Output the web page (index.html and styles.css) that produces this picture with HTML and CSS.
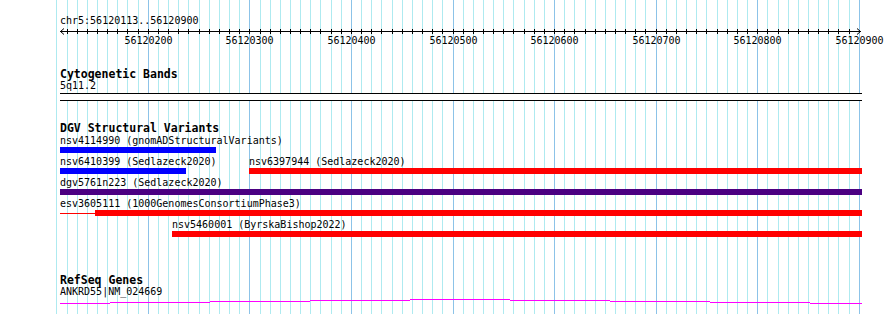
FILE: index.html
```html
<!DOCTYPE html>
<html lang="en">
<head>
  <meta charset="UTF-8">
  <title>chr5:56120113..56120900</title>
  <link rel="stylesheet" href="styles.css">
</head>
<body>
  <div class="browser">
    <svg class="grid" id="grid" width="890" height="314"></svg>

    <div class="tracks">
      <div class="location">chr5:56120113..56120900</div>
      <svg class="ruler" id="ruler" width="890" height="22"></svg>

      <section class="track cyto">
        <h2 class="track-label">Cytogenetic Bands</h2>
        <div class="row">
          <div class="feature" style="margin-left: 60px; width: 802px;">
            <div class="feature-label">5q11.2</div>
            <div class="band"></div>
          </div>
        </div>
      </section>

      <section class="track dgv">
        <h2 class="track-label">DGV Structural Variants</h2>
        <div class="row">
          <div class="feature" style="margin-left: 60px; width: 156px;">
            <div class="feature-label">nsv4114990 (gnomADStructuralVariants)</div>
            <div class="bar blue"></div>
          </div>
        </div>
        <div class="row">
          <div class="feature" style="margin-left: 60px; width: 126px;">
            <div class="feature-label">nsv6410399 (Sedlazeck2020)</div>
            <div class="bar blue"></div>
          </div>
          <div class="feature" style="margin-left: 63px; width: 613px;">
            <div class="feature-label">nsv6397944 (Sedlazeck2020)</div>
            <div class="bar red"></div>
          </div>
        </div>
        <div class="row">
          <div class="feature" style="margin-left: 60px; width: 802px;">
            <div class="feature-label">dgv5761n223 (Sedlazeck2020)</div>
            <div class="bar indigo"></div>
          </div>
        </div>
        <div class="row">
          <div class="feature" style="margin-left: 60px; width: 802px;">
            <div class="feature-label">esv3605111 (1000GenomesConsortiumPhase3)</div>
            <div class="split">
              <div class="thin red" style="width: 35px;"></div>
              <div class="bar red"></div>
            </div>
          </div>
        </div>
        <div class="row">
          <div class="feature" style="margin-left: 172px; width: 690px;">
            <div class="feature-label">nsv5460001 (ByrskaBishop2022)</div>
            <div class="bar red"></div>
          </div>
        </div>
      </section>

      <section class="track refseq">
        <h2 class="track-label">RefSeq Genes</h2>
        <div class="row">
          <div class="feature" style="margin-left: 60px; width: 802px;">
            <div class="feature-label">ANKRD55|NM_024669</div>
            <svg class="gene" width="802" height="6">
              <line x1="0" y1="4.5" x2="50" y2="4.5"/>
              <line x1="50" y1="3.5" x2="150" y2="3.5"/>
              <line x1="150" y1="2.5" x2="250" y2="2.5"/>
              <line x1="250" y1="1.5" x2="350" y2="1.5"/>
              <line x1="350" y1="0.5" x2="450" y2="0.5"/>
              <line x1="450" y1="1.5" x2="550" y2="1.5"/>
              <line x1="550" y1="2.5" x2="650" y2="2.5"/>
              <line x1="650" y1="3.5" x2="750" y2="3.5"/>
              <line x1="750" y1="4.5" x2="802" y2="4.5"/>
            </svg>
          </div>
        </div>
      </section>
    </div>
  </div>

  <script>
    // bp -> screen x (56120200 sits on x=148.3, ~1.0157 px per bp)
    const REF = 56120200;
    const X0 = 148.3;
    const SCALE = 1.0157;
    const NS = 'http://www.w3.org/2000/svg';

    function px(bp) {
      return X0 + (bp - REF) * SCALE;
    }

    function el(name, attrs) {
      const node = document.createElementNS(NS, name);
      for (const key in attrs) node.setAttribute(key, attrs[key]);
      return node;
    }

    const grid = document.getElementById('grid');
    const ruler = document.getElementById('ruler');

    ruler.appendChild(el('line', { x1: 60, y1: 4.5, x2: 861, y2: 4.5, class: 'axis' }));
    ruler.appendChild(el('polyline', { points: '64,1.5 60.5,4.5 64,7.5', class: 'axis arrow' }));
    ruler.appendChild(el('polyline', { points: '857,1.5 860.5,4.5 857,7.5', class: 'axis arrow' }));

    for (let bp = 56120110; bp <= 56120900; bp += 10) {
      const x = Math.floor(px(bp)) + 0.5;
      const major = bp % 100 === 0;
      grid.appendChild(el('line', { x1: x, y1: 0, x2: x, y2: 314, class: major ? 'major' : 'minor' }));

      if (x > 62 && x < 858) {
        ruler.appendChild(el('line', { x1: x, y1: 2, x2: x, y2: 7, class: 'axis' }));
      }
      if (major) {
        const label = el('text', { x: x, y: 17, class: 'tick-label' });
        label.textContent = bp;
        ruler.appendChild(label);
      }
    }
  </script>
</body>
</html>
```

FILE: styles.css
```css
body {
  margin: 0;
  background-color: #fff;
  font-family: "DejaVu Sans Mono", "Liberation Mono", monospace;
  font-size: 10px;
  color: #000;
}
.browser {
  position: relative;
  width: 890px;
  height: 314px;
  overflow: hidden;
}
.grid {
  position: absolute;
  top: 0;
  left: 0;
  shape-rendering: crispEdges;
}
.grid .minor {
  stroke: #aeeaf0;
  stroke-width: 1;
}
.grid .major {
  stroke: #8cc3e8;
  stroke-width: 1;
}
.tracks {
  position: relative;
}
.location {
  margin-top: 15px;
  padding-left: 60px;
  line-height: 12px;
  height: 12px;
}
.ruler {
  display: block;
  shape-rendering: crispEdges;
}
.ruler .axis {
  stroke: #000;
  stroke-width: 1;
  fill: none;
}
.ruler .arrow {
  shape-rendering: auto;
}
.tick-label {
  font-family: "DejaVu Sans Mono", monospace;
  font-size: 10px;
  text-anchor: middle;
  fill: #000;
}
.track-label {
  margin: 0;
  padding-left: 60px;
  font-size: 11.5px;
  font-weight: bold;
  line-height: 12px;
  height: 12px;
}
.cyto {
  margin-top: 19px;
}
.dgv {
  margin-top: 21px;
}
.dgv .track-label {
  margin-bottom: 1px;
}
.refseq {
  margin-top: 34px;
}
.row {
  display: flex;
  height: 21px;
}
.cyto .row,
.refseq .row {
  height: auto;
}
.feature {
  flex: none;
}
.feature-label {
  line-height: 12px;
  height: 12px;
  white-space: nowrap;
}
.band {
  margin-top: 1px;
  height: 6px;
  border-top: 1px solid #000;
  border-bottom: 1px solid #000;
  background-color: #fff;
}
.bar {
  height: 6px;
}
.split {
  display: flex;
  align-items: center;
  height: 6px;
}
.split .bar {
  flex: 1;
}
.thin {
  height: 1px;
  flex: none;
}
.blue {
  background-color: #0000ff;
}
.red {
  background-color: #ff0000;
}
.indigo {
  background-color: #4b0082;
}
.gene {
  display: block;
  margin-top: 1px;
  shape-rendering: crispEdges;
}
.gene line {
  stroke: #ff00ff;
  stroke-width: 1;
}
```
